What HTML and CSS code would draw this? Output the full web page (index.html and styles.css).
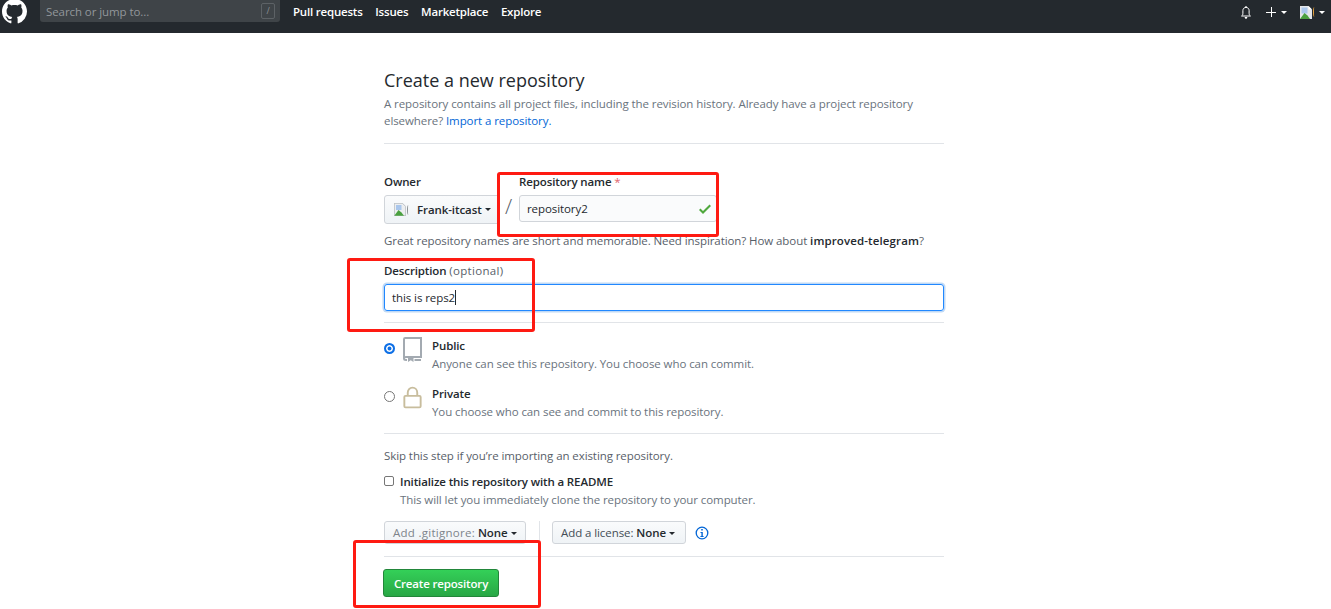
FILE: index.html
```html
<!DOCTYPE html>
<html lang="en">
<head>
<meta charset="utf-8">
<title>Create a new repository</title>
<link rel="stylesheet" href="styles.css">
</head>
<body>
<header class="topbar">
  <svg class="logo" viewBox="0 0 16 16" aria-hidden="true"><path fill="#fff" d="M8 0C3.58 0 0 3.58 0 8c0 3.54 2.29 6.53 5.47 7.59.4.07.55-.17.55-.38 0-.19-.01-.82-.01-1.49-2.01.37-2.53-.49-2.69-.94-.09-.23-.48-.94-.82-1.13-.28-.15-.68-.52-.01-.53.63-.01 1.08.58 1.23.82.72 1.21 1.87.87 2.33.66.07-.52.28-.87.51-1.07-1.78-.2-3.64-.89-3.64-3.95 0-.87.31-1.59.82-2.15-.08-.2-.36-1.02.08-2.12 0 0 .67-.21 2.2.82.64-.18 1.32-.27 2-.27s1.36.09 2 .27c1.53-1.04 2.2-.82 2.2-.82.44 1.1.16 1.92.08 2.12.51.56.82 1.27.82 2.15 0 3.07-1.87 3.75-3.65 3.95.29.25.54.73.54 1.48 0 1.07-.01 1.93-.01 2.2 0 .21.15.46.55.38A8.01 8.01 0 0 0 16 8c0-4.42-3.58-8-8-8z"/></svg>
  <div class="search"><span>Search or jump to...</span><kbd class="slash">/</kbd></div>
  <nav class="nav"><a>Pull requests</a><a>Issues</a><a>Marketplace</a><a>Explore</a></nav>
  <div class="tools">
    <svg class="bell" viewBox="0 0 10 13" aria-hidden="true"><path fill="none" stroke="#fff" stroke-width="1" d="M.6 10c1-.8 1.300-1.500 1.300-2.800V4.500C1.900 2.700 3.200 1.400 5 1.400s3.100 1.300 3.100 3.100v2.700c0 1.300.3 2 1.300 2.800z"/><path fill="#fff" d="M3.700 11h2.600c0 1.100-.5 1.800-1.300 1.800S3.700 12.100 3.700 11zM4.400 0h1.200v1.500H4.400z"/></svg>
    <span class="plus"></span><i class="caret light wide"></i>
    <span class="avatar-wrap">
      <svg class="broken" viewBox="0 0 12 13" aria-hidden="true"><path fill="#e3e6ea" d="M0 0h8.500L12 3.500V13H0z"/><path fill="#fff" d="M8.500 0L12 3.500H8.500z"/><path fill="#a9c6ec" d="M1.500 1.500h6v6h-6z"/><path fill="#4aa03f" d="M0 13l4.500-6 3 2.500 2.500 3.500z"/></svg><span class="sliver"></span>
    </span><i class="caret light tail"></i>
  </div>
</header>

<main class="page">
  <h1 class="title">Create a new repository</h1>
  <p class="lead">A repository contains all project files, including the revision history. Already have a project repository elsewhere? <a class="link">Import a repository.</a></p>
  <hr class="rule rule-head">

  <div class="owner-row">
    <div class="owner-col">
      <div class="label">Owner</div>
      <button class="owner-btn" type="button">
        <svg class="broken small" viewBox="0 0 12 13" aria-hidden="true"><path fill="#eceef0" stroke="#9aa0a6" stroke-width=".6" d="M.3.3h8.200L11.700 3.500v9.200H.3z"/><path fill="#a9c6ec" d="M2 2h5.500v5H2z"/><path fill="#4aa03f" d="M.3 12.700L4.500 7l3 2.500 2.500 3.200z"/></svg>
        <span class="sliver dark"></span>
        <b class="owner-name">Frank-itcast</b><i class="caret"></i>
      </button>
    </div>
    <span class="slash-sep">/</span>
    <div class="name-col">
      <div class="label">Repository name <span class="req">*</span></div>
      <div class="name-input">repository2
        <svg class="check" viewBox="0 0 12 16" aria-hidden="true"><path fill="#4fa83d" d="M12 5l-8 8-4-4 1.500-1.500L4 10l6.500-6.500z"/></svg>
      </div>
    </div>
  </div>
  <p class="hint">Great repository names are short and memorable. Need inspiration? How about <b class="sugg">improved-telegram</b>?</p>

  <div class="label desc-label">Description <span class="opt">(optional)</span></div>
  <div class="desc-input">this is reps2<span class="cursor"></span></div>
  <hr class="rule rule-desc">

  <div class="vis vis-public">
    <span class="radio on"></span>
    <svg class="vis-icon" viewBox="0 0 19 25" aria-hidden="true"><path fill="none" stroke="#a3aab1" stroke-width="2" d="M1 21.500V2.200C1 1.500 1.500 1 2.200 1H18v19H3C1.800 20 1 20.600 1 21.500S1.800 23 3 23h1"/><path fill="none" stroke="#a3aab1" stroke-width="2" d="M11.500 23H18"/><path fill="#a3aab1" d="M5 20h5.500v5l-2.750-1.800L5 25z"/></svg>
    <div class="vis-text"><div class="vis-name">Public</div><div class="vis-desc">Anyone can see this repository. You choose who can commit.</div></div>
  </div>
  <div class="vis vis-private">
    <span class="radio"></span>
    <svg class="vis-icon" viewBox="0 0 24 28" aria-hidden="true"><path fill="none" stroke="#c8bd9d" stroke-width="2.400" d="M6 12V8c0-3.700 2.500-6.500 6-6.500s6 2.800 6 6.500v4"/><rect x="1.700" y="12" width="20.600" height="14.500" rx="1.500" fill="none" stroke="#c8bd9d" stroke-width="2.400"/></svg>
    <div class="vis-text"><div class="vis-name">Private</div><div class="vis-desc">You choose who can see and commit to this repository.</div></div>
  </div>
  <hr class="rule rule-vis">

  <p class="skip">Skip this step if you’re importing an existing repository.</p>
  <div class="readme">
    <span class="checkbox"></span>
    <div><div class="vis-name">Initialize this repository with a README</div><div class="vis-desc">This will let you immediately clone the repository to your computer.</div></div>
  </div>

  <div class="selects">
    <button class="sel sel-ignore" type="button"><span class="sel-key">Add .gitignore:</span> <b class="sel-val">None</b><i class="caret"></i></button>
    <span class="vsep"></span>
    <button class="sel sel-license" type="button"><span class="sel-key dark">Add a license:</span> <b class="sel-val">None</b><i class="caret"></i></button>
    <svg class="info" viewBox="0 0 14 14" aria-hidden="true"><circle cx="7" cy="7" r="5.800" fill="none" stroke="#0366d6" stroke-width="1.300"/><path fill="#0366d6" d="M6.200 3h1.600v1.600H6.200zM5.500 6h2.300v4h.8v1H5.400v-1h1V7h-.9z"/></svg>
  </div>
  <hr class="rule rule-end">
  <button class="create" type="button">Create repository</button>
</main>

<div class="mark mark-name"></div>
<div class="mark mark-desc"></div>
<div class="mark mark-create"></div>
</body>
</html>
```
FILE: styles.css
```css
* { box-sizing: border-box; }
html, body { margin: 0; padding: 0; height: 609px; overflow: hidden; }
body {
  background: #fff;
  color: #24292e;
  font-family: "Open Sans", "Noto Sans", "Liberation Sans", sans-serif;
  font-size: 11.5px;
  letter-spacing: -.08px;
  line-height: 17px;
  position: relative;
}
p, h1 { margin: 0; }
button { font-family: inherit; letter-spacing: inherit; }

/* Top bar */
.topbar {
  height: 33px;
  background: #24292e;
  display: flex;
  align-items: flex-start;
  overflow: hidden;
  padding-left: 2px;
}
.logo { width: 25px; height: 25px; margin-top: -1px; flex: none; }
.search {
  width: 240px;
  height: 22px;
  margin-left: 13px;
  background: #3f4448;
  border-radius: 0 0 3px 3px;
  display: flex;
  align-items: center;
  justify-content: space-between;
  padding: 0 5px 0 6px;
  color: #92979b;
}
.slash {
  width: 14px;
  height: 16px;
  border: 1px solid #5d6266;
  border-radius: 2px;
  font: 9px/14px "Open Sans", sans-serif;
  text-align: center;
  color: #8a8f93;
}
.nav {
  display: flex;
  gap: 12.7px;
  margin-left: 13px;
  height: 23px;
  align-items: center;
  color: #fff;
  font-weight: 600;
  letter-spacing: -.2px;
}
.tools {
  margin-left: auto;
  display: flex;
  align-items: center;
  height: 24px;
  color: #fff;
  padding-right: 6px;
}
.bell { width: 10px; height: 13px; margin-right: 1px; }
.plus { width: 10px; height: 10px; margin-left: 14px; background: linear-gradient(#fff, #fff) center / 10px 1px no-repeat, linear-gradient(#fff, #fff) center / 1px 10px no-repeat; }
.caret {
  display: inline-block;
  width: 0; height: 0;
  border-style: solid;
  border-width: 3.500px 3.500px 0;
  border-color: #24292e transparent transparent;
  vertical-align: 2px;
  margin-left: 3px;
}
.caret.light { border-top-color: #fff; }
.caret.wide { margin-left: 5px; }
.avatar-wrap { display: inline-flex; align-items: center; margin-left: 13px; }
.broken { width: 12px; height: 13px; flex: none; }
.sliver {
  display: inline-block;
  width: 3px; height: 10px;
  border-left: 1.500px solid #e8a33d;
  border-radius: 50% 0 0 50%;
  margin-left: 1px;
}
.sliver.dark { border-left-color: #8a8f93; }

/* Page */
.page { width: 560px; margin-left: 384px; }
.title {
  font-size: 18px;
  font-weight: 400;
  letter-spacing: 0;
  line-height: 24px;
  margin-top: 35px;
}
.lead { color: #6a737d; margin-top: 2.5px; width: 545px; }
.link { color: #0366d6; }
.rule { border: 0; border-top: 1px solid #e1e4e8; margin: 0; }
.rule-head { margin-top: 14.5px; }

.owner-row { display: flex; margin-top: 29px; align-items: flex-start; }
.label { font-weight: 600; line-height: 17px; letter-spacing: -.12px; }
.owner-btn {
  margin-top: 5px;
  height: 29px;
  width: 114px;
  display: flex;
  align-items: center;
  padding: 0 0 0 9px;
  background: linear-gradient(#fafbfc, #eff3f6);
  border: 1px solid #d1d5da;
  border-radius: 3px 0 0 3px;
  color: #24292e;
  font-size: 11.500px;
}
.owner-name { font-weight: 600; margin-left: 7px; }
.slash-sep { width: 21px; margin-top: 20px; font-size: 21px; line-height: 26px; font-weight: 300; text-align: center; color: #586069; }
.name-input {
  margin-top: 5px;
  width: 198px;
  height: 27px;
  background: #fafbfc;
  border: 1px solid #d1d5da;
  border-radius: 3px;
  padding: 0 5px 0 7px;
  display: flex;
  align-items: center;
  justify-content: space-between;
}
.check { width: 12px; height: 16px; flex: none; }
.req { color: #e0636c; font-weight: 400; }
.hint { color: #586069; margin-top: 8px; }
.sugg { font-weight: 600; color: #24292e; letter-spacing: .12px; }
.desc-label { margin-top: 13px; }
.opt { color: #586069; font-weight: 400; letter-spacing: .3px; }
.desc-input {
  margin-top: 4.5px;
  height: 27.5px;
  border: 1px solid #2188ff;
  box-shadow: 0 0 0 1.500px rgba(3,102,214,.25);
  border-radius: 3px;
  padding: 0 7px;
  display: flex;
  align-items: center;
}
.cursor { display: inline-block; width: 1px; height: 15px; background: #24292e; }
.rule-desc { margin-top: 11px; }

.vis { display: flex; align-items: flex-start; }
.vis-public { margin-top: 14px; }
.vis-private { margin-top: 12px; }
.radio {
  width: 11px; height: 11px;
  border-radius: 50%;
  border: 1px solid #767676;
  background: #fff;
  margin-top: 6px;
  flex: none;
}
.radio.on { border: 2px solid #0d6fe6; box-shadow: inset 0 0 0 1.500px #fff; background: #0d6fe6; }
.vis-icon { width: 19px; height: 25px; margin-left: 8px; flex: none; }
.vis-text { margin-left: 10px; }
.vis-name { font-weight: 600; line-height: 18px; letter-spacing: -.12px; }
.vis-desc { color: #6a737d; line-height: 18px; }
.rule-vis { margin-top: 12px; }

.skip { margin-top: 13px; color: #586069; }
.readme { display: flex; align-items: flex-start; margin-top: 9px; }
.checkbox {
  width: 10px; height: 10px;
  border: 1px solid #767676;
  border-radius: 2px;
  margin-top: 3px;
  flex: none;
}
.readme > div { margin-left: 6px; }

.selects { display: flex; align-items: center; margin-top: 12px; height: 23px; }
.sel {
  height: 23px;
  padding: 0 7px 0 8px;
  background: linear-gradient(#fafbfc, #eff3f6);
  border: 1px solid #d1d5da;
  border-radius: 3px;
  font-size: 11.500px;
  color: #24292e;
  text-align: left;
  white-space: nowrap;
}
.sel-ignore { width: 142px; }
.sel-license { width: 134px; }
.sel-key { color: #7d848b; letter-spacing: .27px; }
.sel-key.dark { color: #444d56; letter-spacing: -.08px; }
.sel-val { font-weight: 600; }
.vsep { width: 1px; height: 23px; background: #e1e4e8; margin: 0 12px 0 13px; }
.info { width: 14px; height: 14px; margin-left: 9px; }
.rule-end { margin-top: 12px; }
.create {
  display: block;
  margin: 12px 0 0 -1px;
  width: 116px;
  height: 28px;
  padding: 0;
  border: 1px solid #22863a;
  border-radius: 3px;
  background: linear-gradient(#34d058, #28a745);
  color: #fff;
  font-size: 11.500px;
  font-weight: 600;
  letter-spacing: -.16px;
}

/* Annotation boxes drawn over the screenshot */
.mark { position: absolute; border: 3px solid #fe1a12; border-radius: 3px; pointer-events: none; }
.mark-name { left: 497px; top: 172px; width: 222px; height: 65px; }
.mark-desc { left: 347px; top: 258px; width: 188px; height: 74px; }
.mark-create { left: 353px; top: 540px; width: 188px; height: 68px; }
```
